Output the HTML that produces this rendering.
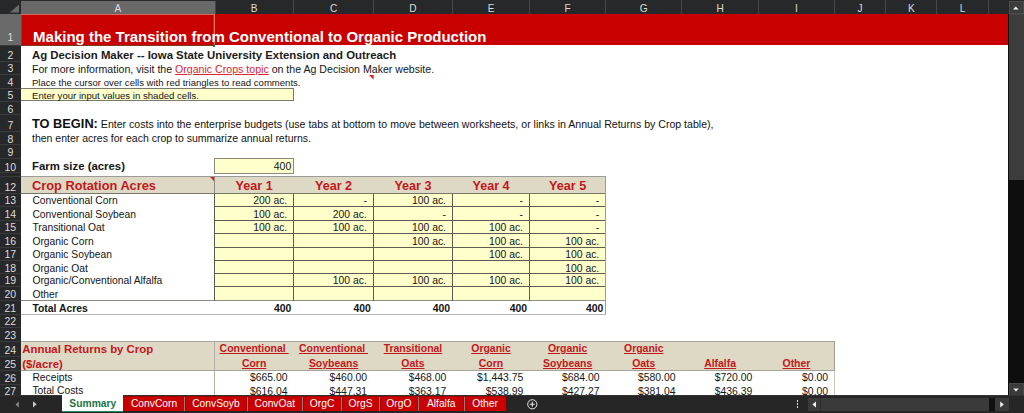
<!DOCTYPE html>
<html lang="en"><head><meta charset="utf-8"><title>Making the Transition from Conventional to Organic Production</title>
<style>
html,body{margin:0;padding:0;background:#fff;}
#s{position:relative;width:1024px;height:413px;overflow:hidden;font-family:"Liberation Sans", sans-serif;}
.b{position:absolute;display:block;}
.t{position:absolute;white-space:nowrap;}
</style></head><body><div id="s">
<div class="b" style="left:0.00px;top:0.00px;width:1024.00px;height:413.00px;background:#fff;"></div>
<div class="b" style="left:21.00px;top:14.00px;width:987.00px;height:31.40px;background:#c80000;"></div>
<div class="b" style="left:0.00px;top:0.00px;width:1008.00px;height:14.00px;background:#27282a;"></div>
<div class="b" style="left:21.00px;top:1.00px;width:193.80px;height:13.00px;background:#696969;"></div>
<svg class="b" style="left:0;top:0" width="21" height="14"><polygon points="19,4.5 19,12.5 10,12.5" fill="#6a6a6a"/></svg>
<div class="t" style="top:3px;font-size:10.1px;line-height:11px;height:11px;color:#dcdcdc;left:-82.25px;width:400px;text-align:center;">A</div>
<div class="b" style="left:293.00px;top:0.00px;width:1.00px;height:14.00px;background:#46474a;"></div>
<div class="t" style="top:3px;font-size:10.1px;line-height:11px;height:11px;color:#dcdcdc;left:54.12px;width:400px;text-align:center;">B</div>
<div class="b" style="left:373.00px;top:0.00px;width:1.00px;height:14.00px;background:#46474a;"></div>
<div class="t" style="top:3px;font-size:10.1px;line-height:11px;height:11px;color:#dcdcdc;left:133.57px;width:400px;text-align:center;">C</div>
<div class="b" style="left:452.00px;top:0.00px;width:1.00px;height:14.00px;background:#46474a;"></div>
<div class="t" style="top:3px;font-size:10.1px;line-height:11px;height:11px;color:#dcdcdc;left:212.95px;width:400px;text-align:center;">D</div>
<div class="b" style="left:529.00px;top:0.00px;width:1.00px;height:14.00px;background:#46474a;"></div>
<div class="t" style="top:3px;font-size:10.1px;line-height:11px;height:11px;color:#dcdcdc;left:291.00px;width:400px;text-align:center;">E</div>
<div class="b" style="left:605.00px;top:0.00px;width:1.00px;height:14.00px;background:#46474a;"></div>
<div class="t" style="top:3px;font-size:10.1px;line-height:11px;height:11px;color:#dcdcdc;left:367.62px;width:400px;text-align:center;">F</div>
<div class="b" style="left:681.00px;top:0.00px;width:1.00px;height:14.00px;background:#46474a;"></div>
<div class="t" style="top:3px;font-size:10.1px;line-height:11px;height:11px;color:#dcdcdc;left:443.75px;width:400px;text-align:center;">G</div>
<div class="b" style="left:758.00px;top:0.00px;width:1.00px;height:14.00px;background:#46474a;"></div>
<div class="t" style="top:3px;font-size:10.1px;line-height:11px;height:11px;color:#dcdcdc;left:520.12px;width:400px;text-align:center;">H</div>
<div class="b" style="left:834.00px;top:0.00px;width:1.00px;height:14.00px;background:#46474a;"></div>
<div class="t" style="top:3px;font-size:10.1px;line-height:11px;height:11px;color:#dcdcdc;left:596.45px;width:400px;text-align:center;">I</div>
<div class="b" style="left:885.00px;top:0.00px;width:1.00px;height:14.00px;background:#46474a;"></div>
<div class="t" style="top:3px;font-size:10.1px;line-height:11px;height:11px;color:#dcdcdc;left:660.05px;width:400px;text-align:center;">J</div>
<div class="b" style="left:936.00px;top:0.00px;width:1.00px;height:14.00px;background:#46474a;"></div>
<div class="t" style="top:3px;font-size:10.1px;line-height:11px;height:11px;color:#dcdcdc;left:711.25px;width:400px;text-align:center;">K</div>
<div class="b" style="left:988.00px;top:0.00px;width:1.00px;height:14.00px;background:#46474a;"></div>
<div class="t" style="top:3px;font-size:10.1px;line-height:11px;height:11px;color:#dcdcdc;left:762.45px;width:400px;text-align:center;">L</div>
<div class="b" style="left:214.50px;top:1.00px;width:1.00px;height:13.00px;background:#46474a;"></div>
<div class="b" style="left:0.00px;top:14.00px;width:21.00px;height:381.00px;background:#27282a;"></div>
<div class="b" style="left:0.00px;top:14.00px;width:20.60px;height:31.60px;background:#696969;"></div>
<div class="b" style="left:0.00px;top:45.00px;width:21.00px;height:1.00px;background:#3a3b3d;"></div>
<div class="t" style="top:31px;font-size:10.5px;line-height:12px;height:12px;color:#dcdcdc;left:-189.70px;width:400px;text-align:center;">1</div>
<div class="b" style="left:0.00px;top:61.00px;width:21.00px;height:1.00px;background:#3a3b3d;"></div>
<div class="t" style="top:49px;font-size:10.5px;line-height:12px;height:12px;color:#dcdcdc;left:-189.70px;width:400px;text-align:center;">2</div>
<div class="b" style="left:0.00px;top:74.00px;width:21.00px;height:1.00px;background:#3a3b3d;"></div>
<div class="t" style="top:62px;font-size:10.5px;line-height:12px;height:12px;color:#dcdcdc;left:-189.70px;width:400px;text-align:center;">3</div>
<div class="b" style="left:0.00px;top:88.00px;width:21.00px;height:1.00px;background:#3a3b3d;"></div>
<div class="t" style="top:76px;font-size:10.5px;line-height:12px;height:12px;color:#dcdcdc;left:-189.70px;width:400px;text-align:center;">4</div>
<div class="b" style="left:0.00px;top:101.00px;width:21.00px;height:1.00px;background:#3a3b3d;"></div>
<div class="t" style="top:89px;font-size:10.5px;line-height:12px;height:12px;color:#dcdcdc;left:-189.70px;width:400px;text-align:center;">5</div>
<div class="b" style="left:0.00px;top:114.00px;width:21.00px;height:1.00px;background:#3a3b3d;"></div>
<div class="t" style="top:103px;font-size:10.5px;line-height:12px;height:12px;color:#dcdcdc;left:-189.70px;width:400px;text-align:center;">6</div>
<div class="b" style="left:0.00px;top:131.00px;width:21.00px;height:1.00px;background:#3a3b3d;"></div>
<div class="t" style="top:119px;font-size:10.5px;line-height:12px;height:12px;color:#dcdcdc;left:-189.70px;width:400px;text-align:center;">7</div>
<div class="b" style="left:0.00px;top:144.00px;width:21.00px;height:1.00px;background:#3a3b3d;"></div>
<div class="t" style="top:133px;font-size:10.5px;line-height:12px;height:12px;color:#dcdcdc;left:-189.70px;width:400px;text-align:center;">8</div>
<div class="b" style="left:0.00px;top:158.00px;width:21.00px;height:1.00px;background:#3a3b3d;"></div>
<div class="t" style="top:146px;font-size:10.5px;line-height:12px;height:12px;color:#dcdcdc;left:-189.70px;width:400px;text-align:center;">9</div>
<div class="b" style="left:0.00px;top:172.00px;width:21.00px;height:1.00px;background:#3a3b3d;"></div>
<div class="t" style="top:161px;font-size:10.5px;line-height:12px;height:12px;color:#dcdcdc;left:-189.70px;width:400px;text-align:center;">10</div>
<div class="b" style="left:0.00px;top:176.00px;width:21.00px;height:1.00px;background:#3a3b3d;"></div>
<div class="b" style="left:0.00px;top:193.00px;width:21.00px;height:1.00px;background:#3a3b3d;"></div>
<div class="t" style="top:181px;font-size:10.5px;line-height:12px;height:12px;color:#dcdcdc;left:-189.70px;width:400px;text-align:center;">12</div>
<div class="b" style="left:0.00px;top:206.00px;width:21.00px;height:1.00px;background:#3a3b3d;"></div>
<div class="t" style="top:194px;font-size:10.5px;line-height:12px;height:12px;color:#dcdcdc;left:-189.70px;width:400px;text-align:center;">13</div>
<div class="b" style="left:0.00px;top:220.00px;width:21.00px;height:1.00px;background:#3a3b3d;"></div>
<div class="t" style="top:208px;font-size:10.5px;line-height:12px;height:12px;color:#dcdcdc;left:-189.70px;width:400px;text-align:center;">14</div>
<div class="b" style="left:0.00px;top:233.00px;width:21.00px;height:1.00px;background:#3a3b3d;"></div>
<div class="t" style="top:221px;font-size:10.5px;line-height:12px;height:12px;color:#dcdcdc;left:-189.70px;width:400px;text-align:center;">15</div>
<div class="b" style="left:0.00px;top:247.00px;width:21.00px;height:1.00px;background:#3a3b3d;"></div>
<div class="t" style="top:235px;font-size:10.5px;line-height:12px;height:12px;color:#dcdcdc;left:-189.70px;width:400px;text-align:center;">16</div>
<div class="b" style="left:0.00px;top:260.00px;width:21.00px;height:1.00px;background:#3a3b3d;"></div>
<div class="t" style="top:248px;font-size:10.5px;line-height:12px;height:12px;color:#dcdcdc;left:-189.70px;width:400px;text-align:center;">17</div>
<div class="b" style="left:0.00px;top:273.00px;width:21.00px;height:1.00px;background:#3a3b3d;"></div>
<div class="t" style="top:262px;font-size:10.5px;line-height:12px;height:12px;color:#dcdcdc;left:-189.70px;width:400px;text-align:center;">18</div>
<div class="b" style="left:0.00px;top:286.00px;width:21.00px;height:1.00px;background:#3a3b3d;"></div>
<div class="t" style="top:274px;font-size:10.5px;line-height:12px;height:12px;color:#dcdcdc;left:-189.70px;width:400px;text-align:center;">19</div>
<div class="b" style="left:0.00px;top:300.00px;width:21.00px;height:1.00px;background:#3a3b3d;"></div>
<div class="t" style="top:288px;font-size:10.5px;line-height:12px;height:12px;color:#dcdcdc;left:-189.70px;width:400px;text-align:center;">20</div>
<div class="b" style="left:0.00px;top:314.00px;width:21.00px;height:1.00px;background:#3a3b3d;"></div>
<div class="t" style="top:302px;font-size:10.5px;line-height:12px;height:12px;color:#dcdcdc;left:-189.70px;width:400px;text-align:center;">21</div>
<div class="b" style="left:0.00px;top:327.00px;width:21.00px;height:1.00px;background:#3a3b3d;"></div>
<div class="t" style="top:315px;font-size:10.5px;line-height:12px;height:12px;color:#dcdcdc;left:-189.70px;width:400px;text-align:center;">22</div>
<div class="b" style="left:0.00px;top:341.00px;width:21.00px;height:1.00px;background:#3a3b3d;"></div>
<div class="t" style="top:329px;font-size:10.5px;line-height:12px;height:12px;color:#dcdcdc;left:-189.70px;width:400px;text-align:center;">23</div>
<div class="b" style="left:0.00px;top:356.00px;width:21.00px;height:1.00px;background:#3a3b3d;"></div>
<div class="t" style="top:344px;font-size:10.5px;line-height:12px;height:12px;color:#dcdcdc;left:-189.70px;width:400px;text-align:center;">24</div>
<div class="b" style="left:0.00px;top:370.00px;width:21.00px;height:1.00px;background:#3a3b3d;"></div>
<div class="t" style="top:358px;font-size:10.5px;line-height:12px;height:12px;color:#dcdcdc;left:-189.70px;width:400px;text-align:center;">25</div>
<div class="b" style="left:0.00px;top:384.00px;width:21.00px;height:1.00px;background:#3a3b3d;"></div>
<div class="t" style="top:372px;font-size:10.5px;line-height:12px;height:12px;color:#dcdcdc;left:-189.70px;width:400px;text-align:center;">26</div>
<div class="b" style="left:0.00px;top:397.00px;width:21.00px;height:1.00px;background:#3a3b3d;"></div>
<div class="t" style="top:385px;font-size:10.5px;line-height:12px;height:12px;color:#dcdcdc;left:-189.70px;width:400px;text-align:center;">27</div>
<div class="b" style="left:21.30px;top:14.00px;width:1.00px;height:31.60px;background:#9a3a20;"></div>
<div class="b" style="left:21.30px;top:44.60px;width:192.70px;height:1.00px;background:#7a3a20;"></div>
<div class="b" style="left:212.80px;top:14.00px;width:1.00px;height:31.00px;background:#a03a20;"></div>
<div class="b" style="left:213.80px;top:14.00px;width:1.00px;height:31.00px;background:#e07868;"></div>
<div class="b" style="left:21.30px;top:13.60px;width:192.70px;height:1.00px;background:#d86a5a;"></div>
<div class="b" style="left:212.80px;top:44.30px;width:2.50px;height:2.70px;background:#1f7a45;"></div>
<div class="t" style="top:28px;font-size:15px;line-height:17px;height:17px;color:#fff;font-weight:bold;left:33.10px;">Making the Transition from Conventional to Organic Production</div>
<div class="t" style="top:49px;font-size:11.38px;line-height:12px;height:12px;color:#1a1a1a;font-weight:bold;left:32.00px;">Ag Decision Maker -- Iowa State University Extension and Outreach</div>
<div class="t" style="top:63px;font-size:10.6px;line-height:12px;height:12px;color:#151515;left:32.00px;">For more information, visit the <span style="color:#d8262c;text-decoration:underline">Organic Crops topic</span> on the Ag Decision Maker website.</div>
<div class="t" style="top:77px;font-size:9.55px;line-height:11px;height:11px;color:#151515;left:32.00px;">Place the cursor over cells with red triangles to read comments.</div>
<div class="b" style="left:21.00px;top:88.20px;width:273.00px;height:13.30px;background:#ffffcc;box-sizing:border-box;border:1px solid #7a7a6a;border-left:none;"></div>
<div class="t" style="top:90px;font-size:9.6px;line-height:11px;height:11px;color:#151515;left:32.00px;">Enter your input values in shaded cells.</div>
<div class="t" style="top:118px;font-size:10.58px;line-height:12px;height:12px;color:#111;left:32.00px;"><b style="font-size:12.8px;line-height:0">TO BEGIN:</b> Enter costs into the enterprise budgets (use tabs at bottom to move between worksheets, or links in Annual Returns by Crop table),</div>
<div class="t" style="top:132px;font-size:10.5px;line-height:12px;height:12px;color:#111;left:32.00px;">then enter acres for each crop to summarize annual returns.</div>
<div class="t" style="top:160px;font-size:11.38px;line-height:12px;height:12px;color:#151515;font-weight:bold;left:32.00px;">Farm size (acres)</div>
<div class="b" style="left:214.00px;top:158.00px;width:80.00px;height:16.00px;background:#ffffcc;box-sizing:border-box;border:1px solid #8a8a80;"></div>
<div class="t" style="top:160px;font-size:10.5px;line-height:12px;height:12px;color:#151515;right:732.70px;text-align:right;">400</div>
<svg class="b" style="left:368.6px;top:75.4px" width="5" height="6"><polygon points="0,0 4.6,0 4.6,4.8" fill="#e0202a"/></svg>
<div class="b" style="left:21.00px;top:176.30px;width:584.80px;height:17.00px;background:#ddd9c4;"></div>
<div class="b" style="left:21.00px;top:175.80px;width:584.80px;height:1.00px;background:#9c9c98;"></div>
<div class="t" style="top:178px;font-size:12.8px;line-height:15px;height:15px;color:#c4161c;font-weight:bold;left:32.00px;">Crop Rotation Acres</div>
<svg class="b" style="left:209.6px;top:176.8px" width="5" height="6"><polygon points="0,0 4.8,0 4.8,5" fill="#e0202a"/></svg>
<div class="t" style="top:179px;font-size:12.6px;line-height:14px;height:14px;color:#c4161c;font-weight:bold;left:54.12px;width:400px;text-align:center;">Year 1</div>
<div class="t" style="top:179px;font-size:12.6px;line-height:14px;height:14px;color:#c4161c;font-weight:bold;left:133.57px;width:400px;text-align:center;">Year 2</div>
<div class="t" style="top:179px;font-size:12.6px;line-height:14px;height:14px;color:#c4161c;font-weight:bold;left:212.95px;width:400px;text-align:center;">Year 3</div>
<div class="t" style="top:179px;font-size:12.6px;line-height:14px;height:14px;color:#c4161c;font-weight:bold;left:291.00px;width:400px;text-align:center;">Year 4</div>
<div class="t" style="top:179px;font-size:12.6px;line-height:14px;height:14px;color:#c4161c;font-weight:bold;left:367.62px;width:400px;text-align:center;">Year 5</div>
<div class="b" style="left:214.50px;top:193.50px;width:391.30px;height:107.10px;background:#ffffcc;"></div>
<div class="t" style="top:195px;font-size:10.3px;line-height:11px;height:11px;color:#151515;left:32.40px;">Conventional Corn</div>
<div class="t" style="top:195px;font-size:10.4px;line-height:11px;height:11px;color:#151515;right:736.75px;text-align:right;">200 ac.</div>
<div class="t" style="top:195px;font-size:10.4px;line-height:11px;height:11px;color:#151515;right:657.10px;text-align:right;">-</div>
<div class="t" style="top:195px;font-size:10.4px;line-height:11px;height:11px;color:#151515;right:578.00px;text-align:right;">100 ac.</div>
<div class="t" style="top:195px;font-size:10.4px;line-height:11px;height:11px;color:#151515;right:501.00px;text-align:right;">-</div>
<div class="t" style="top:195px;font-size:10.4px;line-height:11px;height:11px;color:#151515;right:424.75px;text-align:right;">-</div>
<div class="b" style="left:21.00px;top:193.00px;width:584.80px;height:1.00px;background:#77776c;"></div>
<div class="t" style="top:209px;font-size:10.3px;line-height:11px;height:11px;color:#151515;left:32.40px;">Conventional Soybean</div>
<div class="t" style="top:209px;font-size:10.4px;line-height:11px;height:11px;color:#151515;right:736.75px;text-align:right;">100 ac.</div>
<div class="t" style="top:209px;font-size:10.4px;line-height:11px;height:11px;color:#151515;right:657.10px;text-align:right;">200 ac.</div>
<div class="t" style="top:209px;font-size:10.4px;line-height:11px;height:11px;color:#151515;right:578.00px;text-align:right;">-</div>
<div class="t" style="top:209px;font-size:10.4px;line-height:11px;height:11px;color:#151515;right:501.00px;text-align:right;">-</div>
<div class="t" style="top:209px;font-size:10.4px;line-height:11px;height:11px;color:#151515;right:424.75px;text-align:right;">-</div>
<div class="b" style="left:214.50px;top:206.00px;width:391.30px;height:1.00px;background:#5c5c54;"></div>
<div class="t" style="top:222px;font-size:10.3px;line-height:11px;height:11px;color:#151515;left:32.40px;">Transitional Oat</div>
<div class="t" style="top:222px;font-size:10.4px;line-height:11px;height:11px;color:#151515;right:736.75px;text-align:right;">100 ac.</div>
<div class="t" style="top:222px;font-size:10.4px;line-height:11px;height:11px;color:#151515;right:657.10px;text-align:right;">100 ac.</div>
<div class="t" style="top:222px;font-size:10.4px;line-height:11px;height:11px;color:#151515;right:578.00px;text-align:right;">100 ac.</div>
<div class="t" style="top:222px;font-size:10.4px;line-height:11px;height:11px;color:#151515;right:501.00px;text-align:right;">100 ac.</div>
<div class="t" style="top:222px;font-size:10.4px;line-height:11px;height:11px;color:#151515;right:424.75px;text-align:right;">-</div>
<div class="b" style="left:214.50px;top:220.00px;width:391.30px;height:1.00px;background:#5c5c54;"></div>
<div class="t" style="top:236px;font-size:10.3px;line-height:11px;height:11px;color:#151515;left:32.40px;">Organic Corn</div>
<div class="t" style="top:236px;font-size:10.4px;line-height:11px;height:11px;color:#151515;right:578.00px;text-align:right;">100 ac.</div>
<div class="t" style="top:236px;font-size:10.4px;line-height:11px;height:11px;color:#151515;right:501.00px;text-align:right;">100 ac.</div>
<div class="t" style="top:236px;font-size:10.4px;line-height:11px;height:11px;color:#151515;right:424.75px;text-align:right;">100 ac.</div>
<div class="b" style="left:214.50px;top:233.00px;width:391.30px;height:1.00px;background:#5c5c54;"></div>
<div class="t" style="top:249px;font-size:10.3px;line-height:11px;height:11px;color:#151515;left:32.40px;">Organic Soybean</div>
<div class="t" style="top:249px;font-size:10.4px;line-height:11px;height:11px;color:#151515;right:501.00px;text-align:right;">100 ac.</div>
<div class="t" style="top:249px;font-size:10.4px;line-height:11px;height:11px;color:#151515;right:424.75px;text-align:right;">100 ac.</div>
<div class="b" style="left:214.50px;top:247.00px;width:391.30px;height:1.00px;background:#5c5c54;"></div>
<div class="t" style="top:263px;font-size:10.3px;line-height:11px;height:11px;color:#151515;left:32.40px;">Organic Oat</div>
<div class="t" style="top:263px;font-size:10.4px;line-height:11px;height:11px;color:#151515;right:424.75px;text-align:right;">100 ac.</div>
<div class="b" style="left:214.50px;top:260.00px;width:391.30px;height:1.00px;background:#5c5c54;"></div>
<div class="t" style="top:275px;font-size:10.3px;line-height:11px;height:11px;color:#151515;left:32.40px;">Organic/Conventional Alfalfa</div>
<div class="t" style="top:275px;font-size:10.4px;line-height:11px;height:11px;color:#151515;right:657.10px;text-align:right;">100 ac.</div>
<div class="t" style="top:275px;font-size:10.4px;line-height:11px;height:11px;color:#151515;right:578.00px;text-align:right;">100 ac.</div>
<div class="t" style="top:275px;font-size:10.4px;line-height:11px;height:11px;color:#151515;right:501.00px;text-align:right;">100 ac.</div>
<div class="t" style="top:275px;font-size:10.4px;line-height:11px;height:11px;color:#151515;right:424.75px;text-align:right;">100 ac.</div>
<div class="b" style="left:214.50px;top:273.00px;width:391.30px;height:1.00px;background:#5c5c54;"></div>
<div class="t" style="top:289px;font-size:10.3px;line-height:11px;height:11px;color:#151515;left:32.40px;">Other</div>
<div class="b" style="left:214.50px;top:286.00px;width:391.30px;height:1.00px;background:#5c5c54;"></div>
<div class="b" style="left:21.00px;top:300.00px;width:584.80px;height:1.00px;background:#8c8c84;"></div>
<div class="b" style="left:214.00px;top:193.50px;width:1.00px;height:107.10px;background:#5c5c54;"></div>
<div class="b" style="left:293.00px;top:193.50px;width:1.00px;height:107.10px;background:#5c5c54;"></div>
<div class="b" style="left:373.00px;top:193.50px;width:1.00px;height:107.10px;background:#5c5c54;"></div>
<div class="b" style="left:452.00px;top:193.50px;width:1.00px;height:107.10px;background:#5c5c54;"></div>
<div class="b" style="left:529.00px;top:193.50px;width:1.00px;height:107.10px;background:#5c5c54;"></div>
<div class="b" style="left:605.00px;top:176.30px;width:1.00px;height:137.70px;background:#9a9a94;"></div>
<div class="b" style="left:214.00px;top:176.30px;width:1.00px;height:17.20px;background:#8a8a84;"></div>
<div class="t" style="top:303px;font-size:10.4px;line-height:11px;height:11px;color:#151515;font-weight:bold;left:32.40px;">Total Acres</div>
<div class="t" style="top:303px;font-size:10.4px;line-height:11px;height:11px;color:#151515;font-weight:bold;right:732.75px;text-align:right;">400</div>
<div class="t" style="top:303px;font-size:10.4px;line-height:11px;height:11px;color:#151515;font-weight:bold;right:653.10px;text-align:right;">400</div>
<div class="t" style="top:303px;font-size:10.4px;line-height:11px;height:11px;color:#151515;font-weight:bold;right:574.00px;text-align:right;">400</div>
<div class="t" style="top:303px;font-size:10.4px;line-height:11px;height:11px;color:#151515;font-weight:bold;right:497.00px;text-align:right;">400</div>
<div class="t" style="top:303px;font-size:10.4px;line-height:11px;height:11px;color:#151515;font-weight:bold;right:420.75px;text-align:right;">400</div>
<div class="b" style="left:21.00px;top:313.50px;width:585.00px;height:1.50px;background:#b4b4b4;"></div>
<div class="b" style="left:21.00px;top:341.20px;width:813.60px;height:29.40px;background:#ddd9c4;"></div>
<div class="b" style="left:21.00px;top:340.70px;width:813.60px;height:1.00px;background:#a8a8a0;"></div>
<div class="b" style="left:214.00px;top:341.20px;width:1.00px;height:55.80px;background:#b0b0a8;"></div>
<div class="b" style="left:834.10px;top:341.20px;width:1.00px;height:55.80px;background:#c8c8c0;"></div>
<div class="b" style="left:834.00px;top:341.20px;width:1.00px;height:29.40px;background:#9c9c92;"></div>
<div class="b" style="left:21.00px;top:370.00px;width:813.60px;height:1.00px;background:#a4a49a;"></div>
<div class="t" style="top:343px;font-size:11.38px;line-height:12px;height:12px;color:#c4161c;font-weight:bold;left:22.30px;">Annual Returns by Crop</div>
<div class="t" style="top:358px;font-size:11.38px;line-height:12px;height:12px;color:#c4161c;font-weight:bold;left:22.30px;">($/acre)</div>
<div class="t" style="top:343px;font-size:10.45px;line-height:11px;height:11px;color:#c4161c;font-weight:bold;left:54.12px;width:400px;text-align:center;text-decoration:underline;white-space:pre;">Conventional </div>
<div class="t" style="top:358px;font-size:10.45px;line-height:11px;height:11px;color:#c4161c;font-weight:bold;left:54.12px;width:400px;text-align:center;text-decoration:underline;white-space:pre;">Corn</div>
<div class="t" style="top:343px;font-size:10.45px;line-height:11px;height:11px;color:#c4161c;font-weight:bold;left:133.57px;width:400px;text-align:center;text-decoration:underline;white-space:pre;">Conventional </div>
<div class="t" style="top:358px;font-size:10.45px;line-height:11px;height:11px;color:#c4161c;font-weight:bold;left:133.57px;width:400px;text-align:center;text-decoration:underline;white-space:pre;">Soybeans</div>
<div class="t" style="top:343px;font-size:10.45px;line-height:11px;height:11px;color:#c4161c;font-weight:bold;left:212.95px;width:400px;text-align:center;text-decoration:underline;white-space:pre;">Transitional</div>
<div class="t" style="top:358px;font-size:10.45px;line-height:11px;height:11px;color:#c4161c;font-weight:bold;left:212.95px;width:400px;text-align:center;text-decoration:underline;white-space:pre;">Oats</div>
<div class="t" style="top:343px;font-size:10.45px;line-height:11px;height:11px;color:#c4161c;font-weight:bold;left:291.00px;width:400px;text-align:center;text-decoration:underline;white-space:pre;">Organic</div>
<div class="t" style="top:358px;font-size:10.45px;line-height:11px;height:11px;color:#c4161c;font-weight:bold;left:291.00px;width:400px;text-align:center;text-decoration:underline;white-space:pre;">Corn</div>
<div class="t" style="top:343px;font-size:10.45px;line-height:11px;height:11px;color:#c4161c;font-weight:bold;left:367.62px;width:400px;text-align:center;text-decoration:underline;white-space:pre;">Organic</div>
<div class="t" style="top:358px;font-size:10.45px;line-height:11px;height:11px;color:#c4161c;font-weight:bold;left:367.62px;width:400px;text-align:center;text-decoration:underline;white-space:pre;">Soybeans</div>
<div class="t" style="top:343px;font-size:10.45px;line-height:11px;height:11px;color:#c4161c;font-weight:bold;left:443.75px;width:400px;text-align:center;text-decoration:underline;white-space:pre;">Organic</div>
<div class="t" style="top:358px;font-size:10.45px;line-height:11px;height:11px;color:#c4161c;font-weight:bold;left:443.75px;width:400px;text-align:center;text-decoration:underline;white-space:pre;">Oats</div>
<div class="t" style="top:358px;font-size:10.45px;line-height:11px;height:11px;color:#c4161c;font-weight:bold;left:520.12px;width:400px;text-align:center;text-decoration:underline;white-space:pre;">Alfalfa</div>
<div class="t" style="top:358px;font-size:10.45px;line-height:11px;height:11px;color:#c4161c;font-weight:bold;left:596.45px;width:400px;text-align:center;text-decoration:underline;white-space:pre;">Other</div>
<div class="t" style="top:372px;font-size:10.3px;line-height:11px;height:11px;color:#151515;left:32.40px;">Receipts</div>
<div class="t" style="top:385px;font-size:10.3px;line-height:11px;height:11px;color:#151515;left:32.40px;">Total Costs</div>
<div class="t" style="top:372px;font-size:10.4px;line-height:11px;height:11px;color:#151515;right:736.55px;text-align:right;">$665.00</div>
<div class="t" style="top:386px;font-size:10.4px;line-height:11px;height:11px;color:#151515;right:736.55px;text-align:right;">$616.04</div>
<div class="t" style="top:372px;font-size:10.4px;line-height:11px;height:11px;color:#151515;right:656.90px;text-align:right;">$460.00</div>
<div class="t" style="top:386px;font-size:10.4px;line-height:11px;height:11px;color:#151515;right:656.90px;text-align:right;">$447.31</div>
<div class="t" style="top:372px;font-size:10.4px;line-height:11px;height:11px;color:#151515;right:577.80px;text-align:right;">$468.00</div>
<div class="t" style="top:386px;font-size:10.4px;line-height:11px;height:11px;color:#151515;right:577.80px;text-align:right;">$363.17</div>
<div class="t" style="top:372px;font-size:10.4px;line-height:11px;height:11px;color:#151515;right:500.80px;text-align:right;">$1,443.75</div>
<div class="t" style="top:386px;font-size:10.4px;line-height:11px;height:11px;color:#151515;right:500.80px;text-align:right;">$538.99</div>
<div class="t" style="top:372px;font-size:10.4px;line-height:11px;height:11px;color:#151515;right:424.55px;text-align:right;">$684.00</div>
<div class="t" style="top:386px;font-size:10.4px;line-height:11px;height:11px;color:#151515;right:424.55px;text-align:right;">$427.27</div>
<div class="t" style="top:372px;font-size:10.4px;line-height:11px;height:11px;color:#151515;right:348.55px;text-align:right;">$580.00</div>
<div class="t" style="top:386px;font-size:10.4px;line-height:11px;height:11px;color:#151515;right:348.55px;text-align:right;">$381.04</div>
<div class="t" style="top:372px;font-size:10.4px;line-height:11px;height:11px;color:#151515;right:271.80px;text-align:right;">$720.00</div>
<div class="t" style="top:386px;font-size:10.4px;line-height:11px;height:11px;color:#151515;right:271.80px;text-align:right;">$436.39</div>
<div class="t" style="top:372px;font-size:10.4px;line-height:11px;height:11px;color:#151515;right:195.90px;text-align:right;">$0.00</div>
<div class="t" style="top:386px;font-size:10.4px;line-height:11px;height:11px;color:#151515;right:195.90px;text-align:right;">$0.00</div>
<div class="b" style="left:1008.00px;top:0.00px;width:16.00px;height:396.00px;background:#0e0e0e;"></div>
<div class="b" style="left:1008.00px;top:0.00px;width:16.00px;height:14.00px;background:#27282a;"></div>
<div class="b" style="left:1009.00px;top:14.00px;width:15.00px;height:166.40px;background:#3c3c3c;"></div>
<div class="b" style="left:1009.00px;top:1.00px;width:15.00px;height:13.00px;background:#3c3c3c;box-sizing:border-box;border:1px solid #4b4b4b;"></div>
<div class="b" style="left:1009.00px;top:14.00px;width:15.00px;height:1.00px;background:#454545;"></div>
<svg class="b" style="left:1011px;top:4px" width="10" height="8"><polygon points="4.8,2.6 7.6,5.6 2.0,5.6" fill="#f4f4f4"/></svg>
<div class="b" style="left:1009.00px;top:383.00px;width:15.00px;height:13.00px;background:#3a3a3a;box-sizing:border-box;border:1px solid #474747;"></div>
<svg class="b" style="left:1011px;top:386px" width="10" height="8"><polygon points="2.2,2.4 7.8,2.4 5,5.6" fill="#f4f4f4"/></svg>
<div class="b" style="left:0.00px;top:395.00px;width:1024.00px;height:18.00px;background:#262626;"></div>
<div class="b" style="left:0.00px;top:395.00px;width:1024.00px;height:1.00px;background:#323232;"></div>
<svg class="b" style="left:13px;top:400px" width="30" height="9"><polygon points="5.8,1.4 5.8,7.4 2.6,4.4" fill="#8a8a8a"/><polygon points="20,1.2 20,7.4 23.6,4.3" fill="#c8c8c8"/></svg>
<div class="b" style="left:62.30px;top:394.00px;width:61.00px;height:17.00px;background:#fff;"></div>
<div class="b" style="left:62.30px;top:411.00px;width:61.00px;height:1.00px;background:#2a8a55;"></div>
<div class="t" style="top:398px;font-size:10.3px;line-height:11px;height:11px;color:#217346;font-weight:bold;left:-107.20px;width:400px;text-align:center;">Summary</div>
<div class="b" style="left:123.30px;top:396.00px;width:61.50px;height:15.40px;background:#c80000;"></div>
<div class="b" style="left:123.30px;top:396.00px;width:61.50px;height:1.00px;background:#a40000;"></div>
<div class="b" style="left:184.80px;top:396.00px;width:62.20px;height:15.40px;background:#c80000;"></div>
<div class="b" style="left:184.80px;top:396.00px;width:62.20px;height:1.00px;background:#a40000;"></div>
<div class="b" style="left:247.00px;top:396.00px;width:55.60px;height:15.40px;background:#c80000;"></div>
<div class="b" style="left:247.00px;top:396.00px;width:55.60px;height:1.00px;background:#a40000;"></div>
<div class="b" style="left:302.60px;top:396.00px;width:39.00px;height:15.40px;background:#c80000;"></div>
<div class="b" style="left:302.60px;top:396.00px;width:39.00px;height:1.00px;background:#a40000;"></div>
<div class="b" style="left:341.60px;top:396.00px;width:38.10px;height:15.40px;background:#c80000;"></div>
<div class="b" style="left:341.60px;top:396.00px;width:38.10px;height:1.00px;background:#a40000;"></div>
<div class="b" style="left:379.70px;top:396.00px;width:38.30px;height:15.40px;background:#c80000;"></div>
<div class="b" style="left:379.70px;top:396.00px;width:38.30px;height:1.00px;background:#a40000;"></div>
<div class="b" style="left:418.00px;top:396.00px;width:46.40px;height:15.40px;background:#c80000;"></div>
<div class="b" style="left:418.00px;top:396.00px;width:46.40px;height:1.00px;background:#a40000;"></div>
<div class="b" style="left:464.40px;top:396.00px;width:41.40px;height:15.40px;background:#c80000;"></div>
<div class="b" style="left:464.40px;top:396.00px;width:41.40px;height:1.00px;background:#a40000;"></div>
<div class="t" style="top:398px;font-size:10.3px;line-height:11px;height:11px;color:#fff;left:-45.95px;width:400px;text-align:center;">ConvCorn</div>
<div class="b" style="left:183.80px;top:396.00px;width:2.00px;height:15.40px;background:#8a0c0c;"></div>
<div class="b" style="left:184.40px;top:397.00px;width:0.80px;height:14.00px;background:#a07878;"></div>
<div class="t" style="top:398px;font-size:10.3px;line-height:11px;height:11px;color:#fff;left:15.90px;width:400px;text-align:center;">ConvSoyb</div>
<div class="b" style="left:246.00px;top:396.00px;width:2.00px;height:15.40px;background:#8a0c0c;"></div>
<div class="b" style="left:246.60px;top:397.00px;width:0.80px;height:14.00px;background:#a07878;"></div>
<div class="t" style="top:398px;font-size:10.3px;line-height:11px;height:11px;color:#fff;left:74.80px;width:400px;text-align:center;">ConvOat</div>
<div class="b" style="left:301.60px;top:396.00px;width:2.00px;height:15.40px;background:#8a0c0c;"></div>
<div class="b" style="left:302.20px;top:397.00px;width:0.80px;height:14.00px;background:#a07878;"></div>
<div class="t" style="top:398px;font-size:10.3px;line-height:11px;height:11px;color:#fff;left:122.10px;width:400px;text-align:center;">OrgC</div>
<div class="b" style="left:340.60px;top:396.00px;width:2.00px;height:15.40px;background:#8a0c0c;"></div>
<div class="b" style="left:341.20px;top:397.00px;width:0.80px;height:14.00px;background:#a07878;"></div>
<div class="t" style="top:398px;font-size:10.3px;line-height:11px;height:11px;color:#fff;left:160.65px;width:400px;text-align:center;">OrgS</div>
<div class="b" style="left:378.70px;top:396.00px;width:2.00px;height:15.40px;background:#8a0c0c;"></div>
<div class="b" style="left:379.30px;top:397.00px;width:0.80px;height:14.00px;background:#a07878;"></div>
<div class="t" style="top:398px;font-size:10.3px;line-height:11px;height:11px;color:#fff;left:198.85px;width:400px;text-align:center;">OrgO</div>
<div class="b" style="left:417.00px;top:396.00px;width:2.00px;height:15.40px;background:#8a0c0c;"></div>
<div class="b" style="left:417.60px;top:397.00px;width:0.80px;height:14.00px;background:#a07878;"></div>
<div class="t" style="top:398px;font-size:10.3px;line-height:11px;height:11px;color:#fff;left:241.20px;width:400px;text-align:center;">Alfalfa</div>
<div class="b" style="left:463.40px;top:396.00px;width:2.00px;height:15.40px;background:#8a0c0c;"></div>
<div class="b" style="left:464.00px;top:397.00px;width:0.80px;height:14.00px;background:#a07878;"></div>
<div class="t" style="top:398px;font-size:10.3px;line-height:11px;height:11px;color:#fff;left:285.10px;width:400px;text-align:center;">Other</div>
<div class="b" style="left:505.80px;top:396.00px;width:0.80px;height:15.40px;background:#5a1010;"></div>
<svg class="b" style="left:526px;top:397.5px" width="13" height="13"><circle cx="6.3" cy="6.3" r="4.6" fill="none" stroke="#e8e8e8" stroke-width="1"/><path d="M3.8 6.3h5M6.3 3.8v5" stroke="#e8e8e8" stroke-width="1.1"/></svg>
<div class="b" style="left:796.60px;top:400.00px;width:1.80px;height:2.00px;background:#e0e0e0;"></div>
<div class="b" style="left:796.60px;top:403.00px;width:1.80px;height:2.00px;background:#e0e0e0;"></div>
<div class="b" style="left:796.60px;top:406.00px;width:1.80px;height:2.00px;background:#e0e0e0;"></div>
<div class="b" style="left:807.60px;top:398.00px;width:201.20px;height:13.00px;background:#3a3a3a;"></div>
<div class="b" style="left:989.40px;top:398.00px;width:5.80px;height:13.00px;background:#121212;"></div>
<div class="b" style="left:820.40px;top:398.00px;width:0.60px;height:13.00px;background:#2a2a2a;"></div>
<svg class="b" style="left:807.6px;top:398px" width="13" height="13"><polygon points="8,3.4 8,9.6 4.4,6.5" fill="#f0f0f0"/></svg>
<svg class="b" style="left:995.4px;top:398px" width="13" height="13"><polygon points="5.2,3.4 5.2,9.6 8.8,6.5" fill="#f0f0f0"/></svg>
</div></body></html>
